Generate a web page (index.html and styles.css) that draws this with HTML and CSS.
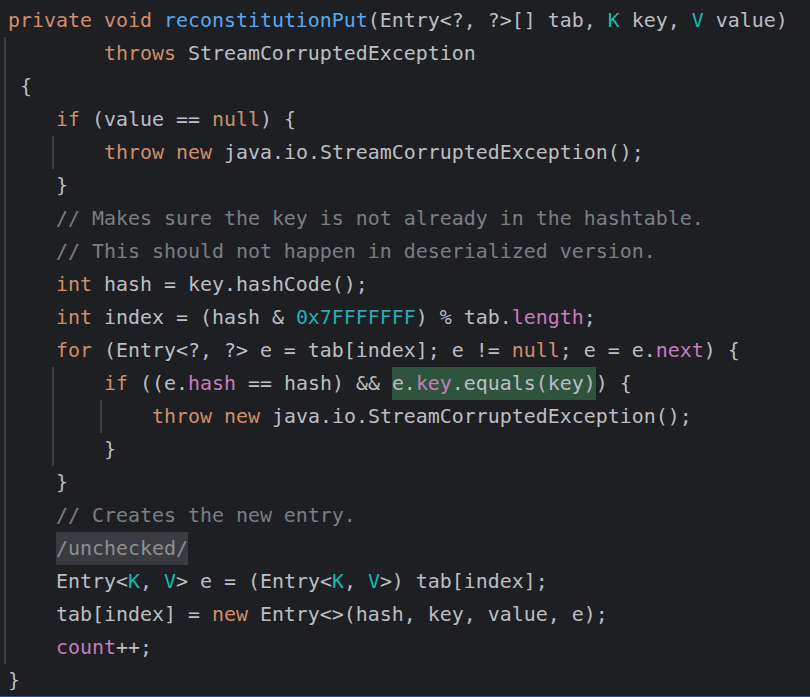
FILE: index.html
```html
<!DOCTYPE html>
<html lang="en">
<head>
  <meta charset="UTF-8">
  <title>reconstitutionPut</title>
  <link rel="stylesheet" href="styles.css">
</head>
<body>
  <div class="editor">
    <div class="line"><span class="kw">private void</span> <span class="fn">reconstitutionPut</span>(Entry&lt;?, ?&gt;[] tab, <span class="tp">K</span> key, <span class="tp">V</span> value)</div>
    <div class="guide guide-root">
      <div class="line">        <span class="kw">throws</span> StreamCorruptedException</div>
      <div class="line"> {</div>
      <div class="line">    <span class="kw">if</span> (value == <span class="kw">null</span>) {</div>
      <div class="guide">
        <div class="line">    <span class="kw">throw new</span> java.io.StreamCorruptedException();</div>
      </div>
      <div class="line">    }</div>
      <div class="line">    <span class="cm">// Makes sure the key is not already in the hashtable.</span></div>
      <div class="line">    <span class="cm">// This should not happen in deserialized version.</span></div>
      <div class="line">    <span class="kw">int</span> hash = key.hashCode();</div>
      <div class="line">    <span class="kw">int</span> index = (hash &amp; <span class="num">0x7FFFFFFF</span>) % tab.<span class="fd">length</span>;</div>
      <div class="line">    <span class="kw">for</span> (Entry&lt;?, ?&gt; e = tab[index]; e != <span class="kw">null</span>; e = e.<span class="fd">next</span>) {</div>
      <div class="guide">
        <div class="line">    <span class="kw">if</span> ((e.<span class="fd">hash</span> == hash) &amp;&amp; <span class="match">e.<span class="fd">key</span>.equals(key)</span>) {</div>
        <div class="guide">
          <div class="line">    <span class="kw">throw new</span> java.io.StreamCorruptedException();</div>
        </div>
        <div class="line">    }</div>
      </div>
      <div class="line">    }</div>
      <div class="line">    <span class="cm">// Creates the new entry.</span></div>
      <div class="line">    <span class="fold">/unchecked/</span></div>
      <div class="line">    Entry&lt;<span class="tp">K</span>, <span class="tp">V</span>&gt; e = (Entry&lt;<span class="tp">K</span>, <span class="tp">V</span>&gt;) tab[index];</div>
      <div class="line">    tab[index] = <span class="kw">new</span> Entry&lt;&gt;(hash, key, value, e);</div>
      <div class="line">    <span class="fd">count</span>++;</div>
    </div>
    <div class="line">}</div>
  </div>
</body>
</html>
```

FILE: styles.css
```css
* {
  box-sizing: border-box;
  margin: 0;
  padding: 0;
}

html,
body {
  height: 100%;
  overflow: hidden;
  background-color: #1e1f22;
}

.editor {
  height: 697px;
  padding: 4px 0 0 8px;
  border-bottom: 1px solid #2b5296;
  font-family: "DejaVu Sans Mono", "Liberation Mono", monospace;
  font-size: 19.93px;
  color: #bcbec4;
}

.line {
  height: 33px;
  line-height: 33px;
  white-space: pre;
}

/* indent guides */
.guide {
  margin-left: 44px;
  padding-left: 2px;
  border-left: 2px solid #393b40;
}

.guide-root {
  margin-left: -4px;
}

.kw {
  color: #cf8e6d;
}

.fn {
  color: #56a8f5;
}

.tp {
  color: #16baac;
}

.num {
  color: #2aacb8;
}

.fd {
  color: #c77dbb;
}

.cm {
  color: #7a7e85;
}

.match {
  display: inline-block;
  background-color: #2e543e;
}

.fold {
  display: inline-block;
  color: #8c8f94;
  background-color: #393b40;
}
```
